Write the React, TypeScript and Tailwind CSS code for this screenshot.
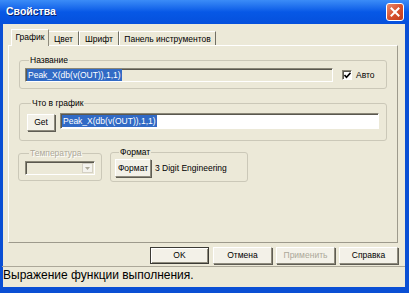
import React from 'react'

const raised =
  'flex items-center justify-center border border-t-white border-l-white border-r-[#8e8b7d] border-b-[#8e8b7d] bg-[#f3f1e8] shadow-[1px_1px_0_#5f5d54]'
const sunken =
  'border border-t-[#8a8778] border-l-[#8a8778] border-r-white border-b-white shadow-[inset_1px_1px_0_#5a584f]'

function Group({
  label,
  disabled,
  className = '',
  children,
}: {
  label: string
  disabled?: boolean
  className?: string
  children: React.ReactNode
}) {
  return (
    <fieldset className={`rounded-[3px] border border-[#cbc8b8] ${className}`}>
      <legend
        className={`ml-[4px] px-[1px] text-[8.5px] leading-[11px] ${
          disabled ? 'text-[#aca899] [text-shadow:1px_1px_0_#fff]' : 'text-black'
        }`}
      >
        {label}
      </legend>
      {children}
    </fieldset>
  )
}

function Selected() {
  return <span className="bg-[#316ac5] px-[1px] text-[8.5px] leading-[12px] text-white">Peak_X(db(v(OUT)),1,1)</span>
}

export default function App() {
  return (
    <div className="flex h-[293px] w-[409px] flex-col overflow-hidden bg-[#0a4fd4] pb-[6px] font-['Liberation_Sans',Arial,sans-serif] text-black">
      {/* Title bar */}
      <div className="flex h-[24px] shrink-0 items-center justify-between bg-gradient-to-b from-[#3b8cf7] via-[#0758e6] to-[#0550dc] pl-[6px] pr-[5px]">
        <span className="text-[10.5px] font-bold text-white [text-shadow:1px_1px_0_#0a246a]">Свойства</span>
        <div className="flex h-[18px] w-[18px] items-center justify-center rounded-[3px] border border-white bg-gradient-to-br from-[#e88a6e] via-[#d8512e] to-[#c03c1c]">
          <svg width="10" height="10" viewBox="0 0 10 10">
            <path d="M1.5 1.5 L8.5 8.5 M8.5 1.5 L1.5 8.5" stroke="white" strokeWidth="2" strokeLinecap="square" />
          </svg>
        </div>
      </div>

      {/* Client area */}
      <div className="ml-[3px] mr-[4px] flex flex-1 flex-col bg-[#ece9d8]">
        {/* Tabs */}
        <div className="flex h-[21px] items-end pl-[8px] text-[8.5px] leading-[11px]">
          <div className="relative z-10 -mb-px flex h-[17px] w-[38px] items-start justify-center border-l border-t border-r border-l-white border-t-white border-r-[#8e8b7d] bg-[#ece9d8] pt-[2px]">
            График
          </div>
          <div className="flex h-[14px] w-[30px] items-start justify-center border-t border-r border-t-white border-r-[#716f64] pt-[2px]">
            Цвет
          </div>
          <div className="flex h-[14px] w-[40px] items-start justify-center border-l border-t border-r border-l-white border-t-white border-r-[#716f64] pt-[2px]">
            Шрифт
          </div>
          <div className="flex h-[14px] w-[97px] items-start justify-center border-l border-t border-r border-l-white border-t-white border-r-[#716f64] pt-[2px]">
            Панель инструментов
          </div>
        </div>

        {/* Panel */}
        <div className="ml-[5px] flex h-[198px] w-[390px] flex-col border border-t-white border-l-white border-r-[#9d9a8c] border-b-[#9d9a8c] pl-[10px] pt-[9px] text-[8.5px] leading-[11px]">
          <Group label="Название" className="w-[368px] pb-[6px] pl-[5px]">
            <div className="mt-[2px] flex items-center">
              <div className={`flex h-[14px] w-[308px] items-center bg-[#ece9d8] pl-[1px] ${sunken}`}>
                <Selected />
              </div>
              <div className={`ml-[9px] flex h-[10px] w-[10px] items-center justify-center bg-white ${sunken}`}>
                <svg width="7" height="7" viewBox="0 0 7 7">
                  <path d="M0.5 3 L2.5 5.2 L6.5 0.8" stroke="black" strokeWidth="1.6" fill="none" />
                </svg>
              </div>
              <span className="ml-[4px]">Авто</span>
            </div>
          </Group>

          <Group label="Что в график" className="mt-[9px] w-[368px] pb-[9px] pl-[7px]">
            <div className="mt-[4px] flex items-start">
              <div className={`mt-[1px] h-[17px] w-[28px] ${raised}`}>Get</div>
              <div className={`ml-[5px] flex h-[16px] w-[319px] items-center bg-white pl-[1px] ${sunken}`}>
                <Selected />
              </div>
            </div>
          </Group>

          <div className="-ml-[1px] mt-[7px] flex items-start gap-[8px]">
            <Group label="Температура" disabled className="w-[84px] pb-[5px] pl-[6px]">
              <div className={`mt-[2px] flex h-[14px] w-[70px] justify-end bg-[#ece9d8] p-[1px] ${sunken}`}>
                <div className="flex w-[11px] items-center justify-center border border-[#d4d0c4] bg-[#f4f3ee]">
                  <svg width="5" height="3" viewBox="0 0 5 3">
                    <path d="M0 0 L5 0 L2.5 3 Z" fill="#aca899" />
                  </svg>
                </div>
              </div>
            </Group>
            <Group label="Формат" className="-mt-[1px] w-[138px] pb-[4px] pl-[4px]">
              <div className="mt-[1px] flex items-center">
                <div className={`h-[18px] w-[36px] ${raised}`}>Формат</div>
                <span className="ml-[4px]">3 Digit Engineering</span>
              </div>
            </Group>
          </div>
        </div>

        {/* Buttons */}
        <div className="mt-[4px] flex justify-end gap-[4px] pr-[7px] text-[8.5px] leading-[11px]">
          <div className="flex h-[17px] w-[59px] items-center justify-center border border-[#3b3a35] bg-[#f3f1e8] shadow-[inset_1px_1px_0_#fff,inset_-1px_-1px_0_#8e8b7d]">
            OK
          </div>
          <div className={`h-[17px] w-[59px] ${raised}`}>Отмена</div>
          <div className={`h-[17px] w-[59px] text-[#aca899] ${raised}`}>Применить</div>
          <div className={`h-[17px] w-[59px] ${raised}`}>Справка</div>
        </div>

        {/* Status bar */}
        <div className="-ml-[1px] mt-[2px] flex flex-1 items-start border-t border-t-[#aca899] pl-[1px] pt-[1px] text-[12px] leading-[14px]">
          Выражение функции выполнения.
        </div>
      </div>
    </div>
  )
}
